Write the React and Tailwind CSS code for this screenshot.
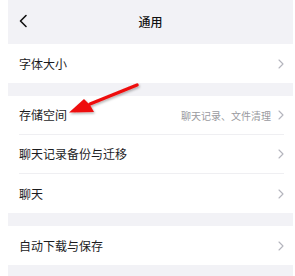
import React from 'react';

const Chevron = () => (
    <svg width="6" height="10" viewBox="0 0 6 10" fill="none" className="shrink-0">
        <path d="M1 1l4 4-4 4" stroke="#b4b5bd" strokeWidth="1.1" strokeLinecap="round" strokeLinejoin="round" />
    </svg>
);

const Row = ({ label, hint, divider }) => (
    <div className="h-[39px] flex items-center pl-[11px] pr-[9px] bg-white">
        <div className={`flex-1 h-full flex items-center ${divider ? 'border-b border-[#efeff2]' : ''}`}>
            <span className="flex-1 text-[12px] text-[#1c1c1e]">{label}</span>
            {hint && <span className="text-[10px] text-[#9a9aa0] mr-[7px]">{hint}</span>}
            <Chevron />
        </div>
    </div>
);

const Gap = ({ h }) => <div className={`bg-[#f2f2f6] ${h}`} />;

const App = () => {
    return (
        <div className="w-[295px] h-[276px] bg-white pl-[8px] pr-[2px] overflow-hidden" style={{ fontFamily: '"Noto Sans CJK SC", "Noto Sans", sans-serif' }}>
            <div className="relative h-full bg-[#f2f2f6]">
                <div className="h-[44px] flex items-center justify-center relative">
                    <svg width="10" height="14" viewBox="0 0 10 14" fill="none" className="absolute left-[10px] top-[14px]">
                        <path d="M8 1.5L2.5 7 8 12.5" stroke="#111" strokeWidth="1.6" strokeLinecap="round" strokeLinejoin="round" />
                    </svg>
                    <span className="text-[12px] font-medium text-[#111]">通用</span>
                </div>
                <Row label="字体大小" />
                <Gap h="h-[13px]" />
                <Row label="存储空间" hint="聊天记录、文件清理" divider />
                <Row label="聊天记录备份与迁移" divider />
                <Row label="聊天" />
                <Gap h="h-[13px]" />
                <Row label="自动下载与保存" />

                {/* red annotation arrow */}
                <svg width="285" height="276" viewBox="0 0 285 276" className="absolute left-0 top-0 pointer-events-none">
                    <defs>
                        <filter id="sh" x="-20%" y="-20%" width="140%" height="140%">
                            <feDropShadow dx="1" dy="1.5" stdDeviation="1" floodColor="#000" floodOpacity="0.3" />
                        </filter>
                    </defs>
                    <g filter="url(#sh)">
                        <path d="M129 85L82 104" stroke="#ee1111" strokeWidth="3.5" strokeLinecap="round" />
                        <path d="M61 112.5L76 99L82 105L86 112Z" fill="#ee1111" />
                    </g>
                </svg>
            </div>
        </div>
    );
};

export default App;
